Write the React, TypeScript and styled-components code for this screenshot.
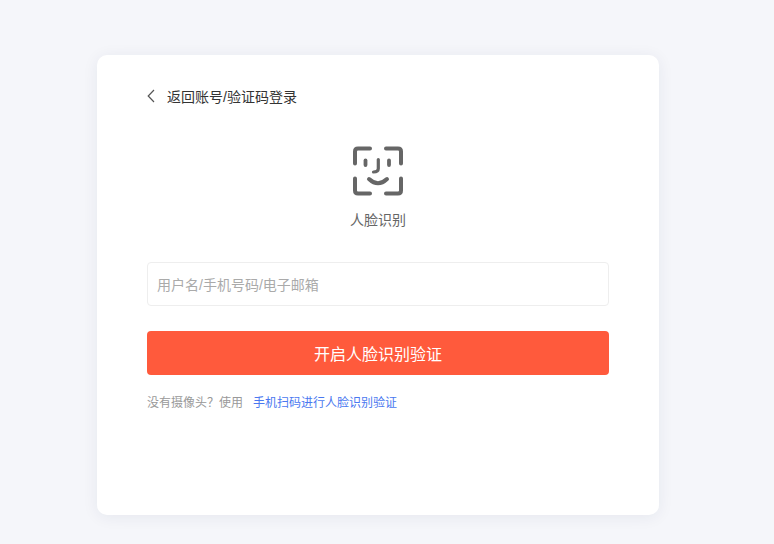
import React from "react";
import styled, { createGlobalStyle } from "styled-components";

const GlobalStyle = createGlobalStyle`
  html, body {
    margin: 0;
    padding: 0;
    background: #f5f6fa;
    font-family: "Liberation Sans", "Noto Sans CJK SC", sans-serif;
  }
`;

const Page = styled.div`
  height: 544px;
  overflow: hidden;
  display: flex;
  flex-direction: column;
  align-items: center;
`;

const TopBar = styled.div`
  width: 100%;
  height: 0;
  box-shadow: 0 0 5px rgba(0, 0, 0, 0.1);
`;

const Card = styled.div`
  width: 462px;
  height: 460px;
  margin-top: 55px;
  margin-right: 18px;
  padding: 0 50px;
  background: #fff;
  border-radius: 10px;
  box-shadow: 0 2px 16px rgba(30, 40, 80, 0.07);
  display: flex;
  flex-direction: column;
`;

const BackRow = styled.div`
  height: 20px;
  margin-top: 31px;
  display: flex;
  align-items: center;
  gap: 11px;
  font-size: 14px;
  color: #333;
`;

const FaceBlock = styled.div`
  margin-top: 39px;
  display: flex;
  flex-direction: column;
  align-items: center;
`;

const FaceLabel = styled.div`
  margin-top: 13px;
  font-size: 14px;
  line-height: 20px;
  color: #666;
`;

const AccountInput = styled.input`
  box-sizing: border-box;
  width: 100%;
  height: 44px;
  margin-top: 32px;
  padding: 2px 9px 0;
  border: 1px solid #eeeeee;
  border-radius: 4px;
  outline: none;
  font-family: inherit;
  font-size: 14px;
  color: #333;

  &::placeholder {
    color: #aaa;
    opacity: 1;
  }
`;

const SubmitButton = styled.button`
  width: 100%;
  height: 44px;
  margin-top: 25px;
  border: none;
  border-radius: 4px;
  background: #ff5a3c;
  color: #fff;
  font-family: inherit;
  font-size: 16px;
`;

const Hint = styled.div`
  margin-top: 20px;
  display: flex;
  gap: 10px;
  font-size: 12px;
  line-height: 17px;
  color: #999;
`;

const HintLink = styled.a`
  color: #4a78f0;
  text-decoration: none;
`;

const BackIcon = () => (
  <svg width="9" height="14" viewBox="0 0 9 14" fill="none">
    <path d="M7 1 L1.2 7 L7 13" stroke="#555" strokeWidth="1.2" />
  </svg>
);

const FaceIcon = () => (
  <svg width="52" height="52" viewBox="0 0 52 52" fill="none" stroke="#666" strokeWidth="4" strokeLinecap="round" strokeLinejoin="round">
    <path d="M3 18.5 V6.5 Q3 3.5 6 3.5 H18" />
    <path d="M34 3.5 H46 Q49 3.5 49 6.5 V18.5" />
    <path d="M3 33.5 V45.5 Q3 48.5 6 48.5 H18" />
    <path d="M34 48.5 H46 Q49 48.5 49 45.5 V33.5" />
    <path d="M13.5 15.5 V20" strokeWidth="3.8" />
    <path d="M37 15.5 V20" strokeWidth="3.8" />
    <path d="M26.3 14.5 V23.5 Q26.3 27 21.5 27" strokeWidth="3.2" />
    <path d="M17 34 Q26 42.5 35 34" />
  </svg>
);

export default function App() {
  return (
    <Page>
      <GlobalStyle />
      <TopBar />
      <Card>
        <BackRow>
          <BackIcon />
          <span>返回账号/验证码登录</span>
        </BackRow>
        <FaceBlock>
          <FaceIcon />
          <FaceLabel>人脸识别</FaceLabel>
        </FaceBlock>
        <AccountInput placeholder="用户名/手机号码/电子邮箱" />
        <SubmitButton>开启人脸识别验证</SubmitButton>
        <Hint>
          <span>没有摄像头？使用</span>
          <HintLink>手机扫码进行人脸识别验证</HintLink>
        </Hint>
      </Card>
    </Page>
  );
}
